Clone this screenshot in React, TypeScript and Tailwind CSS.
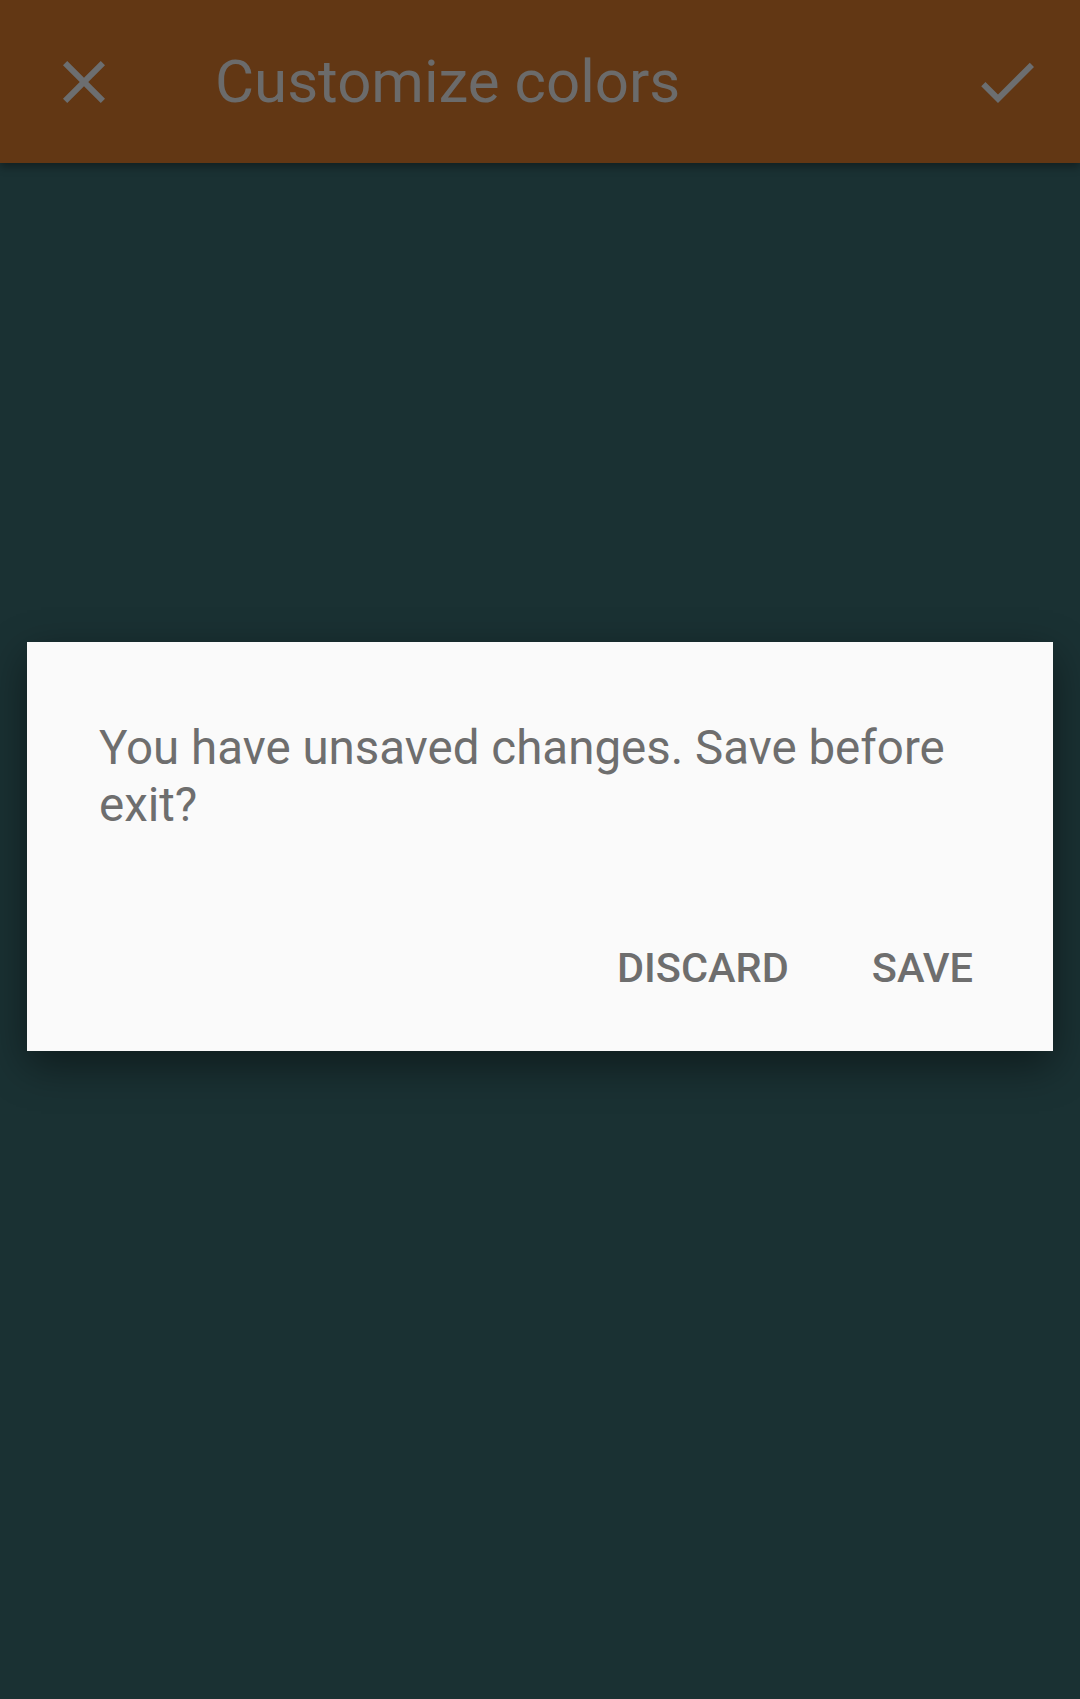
import React from "react"

const CloseIcon = () => (
  <svg viewBox="0 0 24 24" className="h-[72px] w-[72px]" fill="#6c6e70">
    <path d="M19 6.41L17.59 5 12 10.59 6.41 5 5 6.41 10.59 12 5 17.59 6.41 19 12 13.41 17.59 19 19 17.59 13.41 12z" />
  </svg>
)

const CheckIcon = () => (
  <svg viewBox="0 0 24 24" className="h-[72px] w-[72px]" fill="#6c6e70">
    <path d="M9 16.17L4.83 12l-1.42 1.41L9 19 21 7l-1.41-1.41z" />
  </svg>
)

const App: React.FC = () => {
  return (
    <div
      className="relative flex h-[1699px] w-[1080px] flex-col overflow-hidden bg-[#1a3133]"
      style={{ fontFamily: "Roboto, 'Liberation Sans', sans-serif" }}
    >
      {/* toolbar */}
      <div className="relative z-10 flex h-[163px] shrink-0 items-center bg-[#623714] shadow-[0_4px_8px_rgba(0,0,0,0.35)]">
        <div className="ml-[48px] flex h-[72px] w-[72px] items-center justify-center">
          <CloseIcon />
        </div>
        <span className="ml-[95px] flex-1 text-[60px] leading-[68px] text-[#6b6b6b]">
          Customize colors
        </span>
        <div className="mr-[37px] flex h-[72px] w-[72px] items-center justify-center">
          <CheckIcon />
        </div>
      </div>

      <div className="flex-1" />

      {/* dialog */}
      <div className="absolute left-[27px] top-[642px] z-20 w-[1026px] bg-[#fafafa] shadow-[0_14px_40px_rgba(0,0,0,0.45)]">
        <div className="px-[72px] pt-[78px]">
          <p className="text-[47.5px] leading-[57px] text-[#6e6e6e]">
            You have unsaved changes. Save before exit?
          </p>
        </div>
        <div className="mt-[110px] flex justify-end pb-[59px] pr-[80px]">
          <button
            type="button"
            className="text-[41.5px] font-medium leading-[48px] text-[#6e6e6e]"
          >
            DISCARD
          </button>
          <button
            type="button"
            className="ml-[83px] text-[41.5px] font-medium leading-[48px] text-[#6e6e6e]"
          >
            SAVE
          </button>
        </div>
      </div>
    </div>
  )
}

export default App
